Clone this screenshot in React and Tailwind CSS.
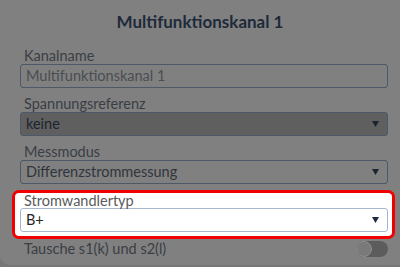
import React from "react";

function Arrow({ color }) {
  return (
    <svg width="7" height="6" viewBox="0 0 7 6" className="shrink-0">
      <polygon points="0,0 7,0 3.5,6" fill={color} />
    </svg>
  );
}

export default function App() {
  const font = { fontFamily: "Lato, 'Noto Sans', sans-serif" };
  return (
    <div className="w-[400px] h-[267px] bg-[#767676] overflow-hidden" style={font}>
      <div className="bg-[#808080] h-[265px] rounded-bl-[10px] pt-[10px]">
        <div className="text-center text-[17px] leading-[24px] font-bold text-[#1e2a3a]">
          Multifunktionskanal 1
        </div>
        <div className="pl-[20px] pr-[12px] mt-[14px] flex flex-col">
          <div className="text-[14.5px] leading-[16px] text-[#3a3e44] pl-[4px]">Kanalname</div>
          <div className="h-[24px] border border-[#4b5968] rounded-[3px] flex items-center px-[5px] text-[14.5px] text-[#4a4d52]">
            Multifunktionskanal 1
          </div>

          <div className="mt-[8px] text-[14.5px] leading-[16px] text-[#3a3e44] pl-[4px]">Spannungsreferenz</div>
          <div className="h-[24px] border border-[#4b5968] bg-[#5f5f5f] rounded-[3px] flex items-center justify-between pl-[5px] pr-[8px] text-[14.5px] text-[#1c2430]">
            <span>keine</span>
            <Arrow color="#1c2430" />
          </div>

          <div className="mt-[8px] text-[14.5px] leading-[16px] text-[#3a3e44] pl-[4px]">Messmodus</div>
          <div className="h-[24px] border border-[#4b5968] rounded-[3px] flex items-center justify-between pl-[5px] pr-[8px] text-[14.5px] text-[#30353c]">
            <span>Differenzstrommessung</span>
            <Arrow color="#1c2430" />
          </div>

          <div className="mt-[6px] ml-[-8px] mr-[-7px] border-[3px] border-[#f00000] rounded-[7px] bg-white pl-[5px] pr-[4px] pb-[4px] pt-0">
            <div className="text-[14.5px] leading-[15px] text-[#5a5a5a] pl-[4px]">Stromwandlertyp</div>
            <div className="h-[24px] border border-[#a8b8cc] rounded-[3px] flex items-center justify-between pl-[5px] pr-[8px] text-[14.5px] text-[#262626]">
              <span>B+</span>
              <Arrow color="#1e2b3c" />
            </div>
          </div>

          <div className="mt-[2px] flex items-center justify-between h-[16px]">
            <span className="text-[14.5px] leading-[16px] text-[#3a3e44] pl-[4px]">Tausche s1(k) und s2(l)</span>
            <div className="w-[32px] h-[16px] rounded-full bg-[#5c5c5c] flex items-center">
              <div className="w-[16px] h-[16px] rounded-full bg-[#7a7a7a] border border-[#8e8e8e]" />
            </div>
          </div>
        </div>
      </div>
    </div>
  );
}
